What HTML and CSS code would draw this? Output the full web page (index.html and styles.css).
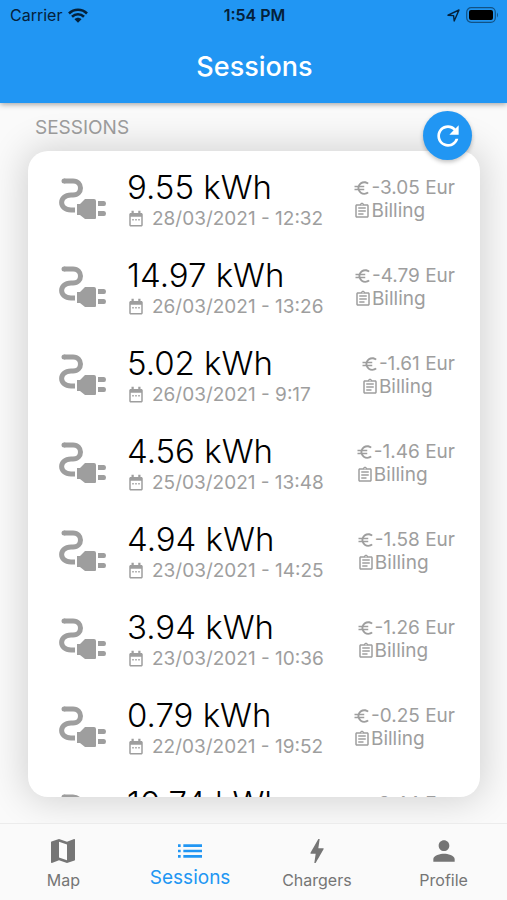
FILE: index.html
```html
<!DOCTYPE html>
<html lang="en">
<head>
<meta charset="utf-8">
<meta name="viewport" content="width=device-width, initial-scale=1">
<title>Sessions</title>
<link rel="stylesheet" href="styles.css">
</head>
<body>
<svg class="sprite" aria-hidden="true">
  <symbol id="plug" viewBox="0 0 48 42">
    <path d="M5 3H14C24 3 24 17 14 17H12C-.5 17-.5 32 12 32H16" fill="none" stroke="currentColor" stroke-width="5"/>
    <circle cx="5" cy="3" r="2.500" fill="currentColor"/>
    <path d="M18 26h3l5-5h9q2 0 2 2v17q0 1-1 1H26l-5-4h-3zM39 23h6q2 0 2 2.500t-2 2.500h-6zM39 33h6q2 0 2 2.500t-2 2.500h-6z" fill="currentColor"/>
  </symbol>
  <symbol id="calendar" viewBox="0 0 24 24">
    <path fill="currentColor" d="M9 12H7v2h2zm4 0h-2v2h2zm4 0h-2v2h2zm2-8h-1V1h-3v3H9V1H6v3H5c-1.100 0-2 .9-2 2v14c0 1.100.9 2 2 2h14c1.100 0 2-.9 2-2V6c0-1.100-.9-2-2-2m0 16H5V9h14z"/>
  </symbol>
  <symbol id="euro" viewBox="0 0 24 24">
    <path fill="currentColor" d="M15 18.500c-2.510 0-4.680-1.420-5.760-3.500H15v-2H8.580c-.05-.33-.08-.66-.08-1s.03-.67.080-1H15V9H9.240C10.320 6.920 12.500 5.500 15 5.500c1.610 0 3.090.59 4.230 1.570L21 5.300C19.410 3.870 17.300 3 15 3c-3.920 0-7.240 2.510-8.480 6H2v2h4.060c-.04.33-.06.66-.06 1s.02.67.060 1H2v2h4.520c1.240 3.490 4.560 6 8.480 6 2.310 0 4.410-.87 6-2.300l-1.780-1.770c-1.130.98-2.600 1.570-4.220 1.570"/>
  </symbol>
  <symbol id="bill" viewBox="0 0 24 24">
    <path fill="currentColor" d="M7 15h7v2H7zm0-4h10v2H7zm0-4h10v2H7zm12-4h-4.180C14.400 1.840 13.300 1 12 1s-2.400.84-2.820 2H5c-1.100 0-2 .9-2 2v14c0 1.100.9 2 2 2h14c1.100 0 2-.9 2-2V5c0-1.100-.9-2-2-2m-7-.25c.41 0 .75.34.75.75s-.34.75-.75.75-.75-.34-.75-.75.34-.75.75-.75M19 19H5V5h14z"/>
  </symbol>
</svg>

<header class="app-bar">
  <div class="status">
    <span class="carrier">Carrier
      <svg width="20" height="15" viewBox="0 0 20 15" aria-hidden="true"><path d="M1 5.500C6 .5 14 .5 19 5.500M4 8.800c3.500-3.400 8.500-3.400 12 0" fill="none" stroke="currentColor" stroke-width="2.600"/><path d="M6.500 11.200c2-2 5-2 7 0L10 14.800z" fill="currentColor"/></svg>
    </span>
    <span class="clock">1:54 PM</span>
    <span class="indicators">
      <svg width="13" height="13" viewBox="0 0 13 13" aria-hidden="true"><path d="M1 6.200 12 1 7.200 12 6.600 6.600z" fill="none" stroke="currentColor" stroke-width="1.400" stroke-linejoin="round"/></svg>
      <svg width="33" height="16" viewBox="0 0 33 16" aria-hidden="true"><rect x=".7" y=".7" width="28.600" height="14.600" rx="4.500" fill="none" stroke="#000" stroke-opacity=".45" stroke-width="1.200"/><rect x="3" y="3" width="24" height="10" rx="2" fill="#000"/><path d="M31 5.500q2 2.500 0 5z" fill="#000" fill-opacity=".45"/></svg>
    </span>
  </div>
  <h1 class="title">Sessions</h1>
</header>

<main class="content">
  <h2 class="section">SESSIONS</h2>
  <button class="refresh" type="button" aria-label="Refresh">
    <svg width="32" height="32" viewBox="0 0 24 24" aria-hidden="true"><path fill="currentColor" d="M17.650 6.350C16.200 4.900 14.210 4 12 4c-4.420 0-7.990 3.580-7.990 8s3.570 8 7.990 8c3.730 0 6.840-2.550 7.730-6h-2.080c-.82 2.330-3.040 4-5.650 4-3.310 0-6-2.690-6-6s2.690-6 6-6c1.660 0 3.140.69 4.220 1.780L13 11h7V4z"/></svg>
  </button>
  <div class="card">
    <ul class="list">
      <li class="row"><svg class="plug"><use href="#plug"/></svg><div class="info"><span class="energy">9.55 kWh</span><span class="date"><svg class="icon"><use href="#calendar"/></svg>28/03/2021 - 12:32</span></div><div class="cost"><span class="line"><svg class="icon"><use href="#euro"/></svg>-3.05 Eur</span><span class="line"><svg class="icon"><use href="#bill"/></svg>Billing</span></div></li>
      <li class="row"><svg class="plug"><use href="#plug"/></svg><div class="info"><span class="energy">14.97 kWh</span><span class="date"><svg class="icon"><use href="#calendar"/></svg>26/03/2021 - 13:26</span></div><div class="cost"><span class="line"><svg class="icon"><use href="#euro"/></svg>-4.79 Eur</span><span class="line"><svg class="icon"><use href="#bill"/></svg>Billing</span></div></li>
      <li class="row"><svg class="plug"><use href="#plug"/></svg><div class="info"><span class="energy">5.02 kWh</span><span class="date"><svg class="icon"><use href="#calendar"/></svg>26/03/2021 - 9:17</span></div><div class="cost"><span class="line"><svg class="icon"><use href="#euro"/></svg>-1.61 Eur</span><span class="line"><svg class="icon"><use href="#bill"/></svg>Billing</span></div></li>
      <li class="row"><svg class="plug"><use href="#plug"/></svg><div class="info"><span class="energy">4.56 kWh</span><span class="date"><svg class="icon"><use href="#calendar"/></svg>25/03/2021 - 13:48</span></div><div class="cost"><span class="line"><svg class="icon"><use href="#euro"/></svg>-1.46 Eur</span><span class="line"><svg class="icon"><use href="#bill"/></svg>Billing</span></div></li>
      <li class="row"><svg class="plug"><use href="#plug"/></svg><div class="info"><span class="energy">4.94 kWh</span><span class="date"><svg class="icon"><use href="#calendar"/></svg>23/03/2021 - 14:25</span></div><div class="cost"><span class="line"><svg class="icon"><use href="#euro"/></svg>-1.58 Eur</span><span class="line"><svg class="icon"><use href="#bill"/></svg>Billing</span></div></li>
      <li class="row"><svg class="plug"><use href="#plug"/></svg><div class="info"><span class="energy">3.94 kWh</span><span class="date"><svg class="icon"><use href="#calendar"/></svg>23/03/2021 - 10:36</span></div><div class="cost"><span class="line"><svg class="icon"><use href="#euro"/></svg>-1.26 Eur</span><span class="line"><svg class="icon"><use href="#bill"/></svg>Billing</span></div></li>
      <li class="row"><svg class="plug"><use href="#plug"/></svg><div class="info"><span class="energy">0.79 kWh</span><span class="date"><svg class="icon"><use href="#calendar"/></svg>22/03/2021 - 19:52</span></div><div class="cost"><span class="line"><svg class="icon"><use href="#euro"/></svg>-0.25 Eur</span><span class="line"><svg class="icon"><use href="#bill"/></svg>Billing</span></div></li>
      <li class="row"><svg class="plug"><use href="#plug"/></svg><div class="info"><span class="energy">10.74 kWh</span></div><div class="cost"><span class="line"><svg class="icon"><use href="#euro"/></svg>-3.44 Eur</span></div></li>
    </ul>
  </div>
</main>

<nav class="tabs">
  <a class="tab" href="#map"><svg class="tab-icon" viewBox="0 0 24 24" aria-hidden="true"><path fill="currentColor" d="m20.500 3-.16.030L15 5.100 9 3 3.360 4.900c-.21.070-.36.250-.36.480V20.500c0 .28.220.5.500.5l.16-.03L9 18.900l6 2.100 5.640-1.900c.21-.07.360-.25.360-.48V3.500c0-.28-.22-.5-.5-.5M15 19l-6-2.110V5l6 2.110z"/></svg>Map</a>
  <a class="tab active" href="#sessions" aria-current="page"><svg class="tab-icon" viewBox="0 0 24 24" aria-hidden="true"><path fill="currentColor" d="M3 7h2v2H3zm0 4h2v2H3zm0 4h2v2H3zM7 7h14v2H7zm0 4h14v2H7zm0 4h14v2H7z"/></svg>Sessions</a>
  <a class="tab" href="#chargers"><svg class="tab-icon" viewBox="0 0 24 24" aria-hidden="true"><path fill="currentColor" d="M11 21h-1l1-7H7.500c-.58 0-.57-.32-.38-.66q.285-.51.070-.12C8.480 10.940 10.420 7.540 13 3h1l-1 7h3.500c.49 0 .56.330.47.510l-.07.150C12.960 17.550 11 21 11 21"/></svg>Chargers</a>
  <a class="tab" href="#profile"><svg class="tab-icon" viewBox="0 0 24 24" aria-hidden="true"><path fill="currentColor" d="M12 12c2.210 0 4-1.790 4-4s-1.790-4-4-4-4 1.790-4 4 1.790 4 4 4m0 2c-2.670 0-8 1.340-8 4v2h16v-2c0-2.660-5.330-4-8-4"/></svg>Profile</a>
</nav>
</body>
</html>
```
FILE: styles.css
```css
* {
  box-sizing: border-box;
}

body {
  margin: 0;
  height: 100vh;
  display: flex;
  flex-direction: column;
  overflow: hidden;
  background: #fafafa;
  font-family: Inter, "Liberation Sans", sans-serif;
  color: #9e9e9e;
}

.sprite {
  position: absolute;
  width: 0;
  height: 0;
}

.app-bar {
  position: relative;
  z-index: 1;
  background: #2196f3;
  color: #fff;
  padding: 4px 8px 18px 10px;
  box-shadow: 0 1px 6px rgba(0, 0, 0, 0.4);
}

.status {
  display: grid;
  grid-template-columns: 1fr auto 1fr;
  align-items: center;
  height: 22px;
  font-size: 16px;
  color: #04213a;
}

.carrier,
.indicators {
  display: flex;
  align-items: center;
  gap: 6px;
}

.indicators {
  justify-content: flex-end;
}

.clock {
  font-weight: 600;
}

.title {
  margin: 22px 0 0;
  font-size: 27px;
  line-height: 37px;
  font-weight: 500;
  text-align: center;
}

.content {
  position: relative;
  flex: 1;
  min-height: 0;
  display: flex;
  flex-direction: column;
  padding: 13px 27px 26px 28px;
}

.section {
  margin: 0 7px 11px;
  font-size: 19px;
  line-height: 24px;
  font-weight: 400;
}

.refresh {
  position: absolute;
  top: 8px;
  right: 35px;
  width: 49px;
  height: 49px;
  padding: 0;
  border: 0;
  border-radius: 50%;
  display: grid;
  place-items: center;
  background: #2196f3;
  color: #fff;
  box-shadow: 0 2px 4px rgba(0, 0, 0, 0.25);
}

.card {
  flex: 1;
  min-height: 0;
  overflow: hidden;
  border-radius: 20px;
  background: #fff;
  box-shadow: 0 0 36px 4px rgba(0, 0, 0, 0.16);
}

.list {
  margin: 0;
  padding: 17px 25px 0 31px;
  list-style: none;
}

.row {
  display: flex;
  align-items: flex-start;
  height: 88px;
}

.plug {
  width: 48px;
  height: 42px;
  margin: 10px 20px 0 0;
}

.info {
  flex: 1;
  display: flex;
  flex-direction: column;
}

.energy {
  font-size: 33px;
  line-height: 39px;
  font-weight: 300;
  color: #000;
}

.date,
.line {
  display: flex;
  align-items: center;
  font-size: 19px;
  line-height: 23px;
  white-space: nowrap;
}

.date {
  gap: 7px;
}

.icon {
  width: 18px;
  height: 18px;
}

.cost {
  padding-top: 8px;
}

.tabs {
  position: relative;
  display: grid;
  grid-template-columns: repeat(4, 1fr);
  height: 77px;
  border-top: 1px solid #ececec;
  background: #fafafa;
}

.tab {
  display: flex;
  flex-direction: column;
  align-items: center;
  gap: 1px;
  padding-top: 11px;
  font-size: 16px;
  line-height: 24px;
  color: #757575;
  text-decoration: none;
}

.tab-icon {
  width: 32px;
  height: 32px;
}

.active {
  gap: 0;
  font-size: 19px;
  line-height: 22px;
  color: #2196f3;
}
```
